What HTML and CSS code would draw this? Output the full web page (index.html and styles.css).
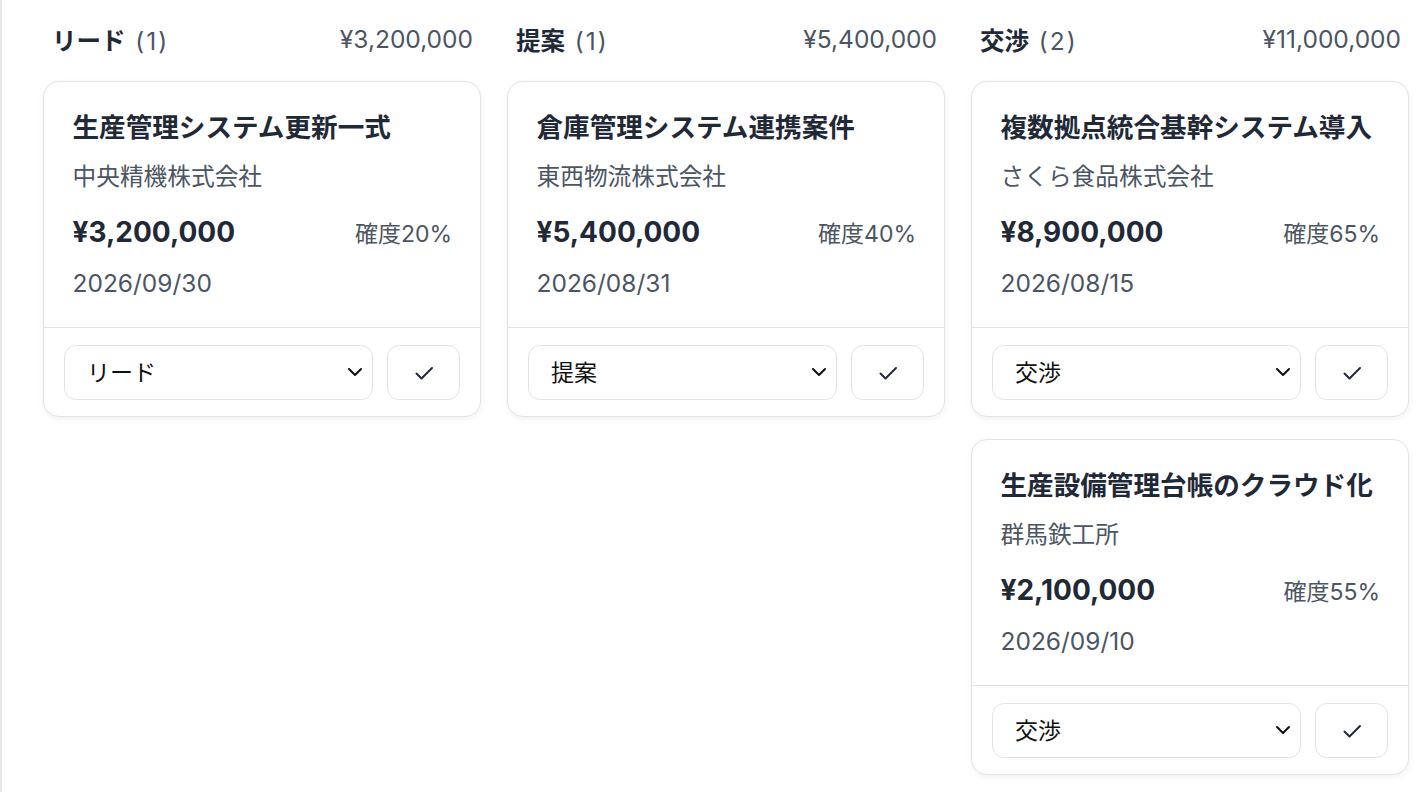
FILE: index.html
```html
<!DOCTYPE html>
<html lang="ja">
<head>
    <meta charset="UTF-8">
    <meta name="viewport" content="width=device-width, initial-scale=1.0">
    <title>案件ボード</title>
    <link rel="stylesheet" href="styles.css">
</head>
<body>
    <div class="board">
        <!-- リード -->
        <div class="column">
            <div class="column-head">
                <div class="column-title">リード <span class="count">(1)</span></div>
                <div class="column-total">¥3,200,000</div>
            </div>
            <div class="card">
                <div class="card-body">
                    <div class="deal-name">生産管理システム更新一式</div>
                    <div class="company">中央精機株式会社</div>
                    <div class="meta">
                        <span class="amount">¥3,200,000</span>
                        <span class="prob">確度20%</span>
                    </div>
                    <div class="date">2026/09/30</div>
                </div>
                <div class="card-foot">
                    <div class="select-wrap">
                        <select class="stage">
                            <option selected>リード</option>
                            <option>提案</option>
                            <option>交渉</option>
                        </select>
                        <svg class="chevron" width="20" height="20" viewBox="0 0 20 20"><path d="M4 7l6 6 6-6" fill="none" stroke="#111" stroke-width="2" stroke-linecap="round" stroke-linejoin="round"/></svg>
                    </div>
                    <button class="save"><svg width="24" height="24" viewBox="0 0 24 24"><path d="M4.5 12.5l5 5L20 7" fill="none" stroke="#1f2937" stroke-width="2" stroke-linecap="round" stroke-linejoin="round"/></svg></button>
                </div>
            </div>
        </div>

        <!-- 提案 -->
        <div class="column">
            <div class="column-head">
                <div class="column-title">提案 <span class="count">(1)</span></div>
                <div class="column-total">¥5,400,000</div>
            </div>
            <div class="card">
                <div class="card-body">
                    <div class="deal-name">倉庫管理システム連携案件</div>
                    <div class="company">東西物流株式会社</div>
                    <div class="meta">
                        <span class="amount">¥5,400,000</span>
                        <span class="prob">確度40%</span>
                    </div>
                    <div class="date">2026/08/31</div>
                </div>
                <div class="card-foot">
                    <div class="select-wrap">
                        <select class="stage">
                            <option>リード</option>
                            <option selected>提案</option>
                            <option>交渉</option>
                        </select>
                        <svg class="chevron" width="20" height="20" viewBox="0 0 20 20"><path d="M4 7l6 6 6-6" fill="none" stroke="#111" stroke-width="2" stroke-linecap="round" stroke-linejoin="round"/></svg>
                    </div>
                    <button class="save"><svg width="24" height="24" viewBox="0 0 24 24"><path d="M4.5 12.5l5 5L20 7" fill="none" stroke="#1f2937" stroke-width="2" stroke-linecap="round" stroke-linejoin="round"/></svg></button>
                </div>
            </div>
        </div>

        <!-- 交渉 -->
        <div class="column">
            <div class="column-head">
                <div class="column-title">交渉 <span class="count">(2)</span></div>
                <div class="column-total">¥11,000,000</div>
            </div>
            <div class="card">
                <div class="card-body">
                    <div class="deal-name">複数拠点統合基幹システム導入</div>
                    <div class="company">さくら食品株式会社</div>
                    <div class="meta">
                        <span class="amount">¥8,900,000</span>
                        <span class="prob">確度65%</span>
                    </div>
                    <div class="date">2026/08/15</div>
                </div>
                <div class="card-foot">
                    <div class="select-wrap">
                        <select class="stage">
                            <option>リード</option>
                            <option>提案</option>
                            <option selected>交渉</option>
                        </select>
                        <svg class="chevron" width="20" height="20" viewBox="0 0 20 20"><path d="M4 7l6 6 6-6" fill="none" stroke="#111" stroke-width="2" stroke-linecap="round" stroke-linejoin="round"/></svg>
                    </div>
                    <button class="save"><svg width="24" height="24" viewBox="0 0 24 24"><path d="M4.5 12.5l5 5L20 7" fill="none" stroke="#1f2937" stroke-width="2" stroke-linecap="round" stroke-linejoin="round"/></svg></button>
                </div>
            </div>
            <div class="card">
                <div class="card-body">
                    <div class="deal-name">生産設備管理台帳のクラウド化</div>
                    <div class="company">群馬鉄工所</div>
                    <div class="meta">
                        <span class="amount">¥2,100,000</span>
                        <span class="prob">確度55%</span>
                    </div>
                    <div class="date">2026/09/10</div>
                </div>
                <div class="card-foot">
                    <div class="select-wrap">
                        <select class="stage">
                            <option>リード</option>
                            <option>提案</option>
                            <option selected>交渉</option>
                        </select>
                        <svg class="chevron" width="20" height="20" viewBox="0 0 20 20"><path d="M4 7l6 6 6-6" fill="none" stroke="#111" stroke-width="2" stroke-linecap="round" stroke-linejoin="round"/></svg>
                    </div>
                    <button class="save"><svg width="24" height="24" viewBox="0 0 24 24"><path d="M4.5 12.5l5 5L20 7" fill="none" stroke="#1f2937" stroke-width="2" stroke-linecap="round" stroke-linejoin="round"/></svg></button>
                </div>
            </div>
        </div>
    </div>
</body>
</html>
```

FILE: styles.css
```css
body {
    margin: 0;
    font-family: Inter, "Noto Sans CJK JP", sans-serif;
    background: #fff;
    color: #1f2937;
}

.board {
    display: grid;
    grid-template-columns: 438px 438px 438px;
    column-gap: 26px;
    align-items: start;
    padding: 19px 0 0 41px;
    border-left: 2px solid #e5e7eb;
    min-height: 792px;
    box-sizing: border-box;
}

.column {
    display: flex;
    flex-direction: column;
    gap: 22px;
}

.column-head {
    display: flex;
    justify-content: space-between;
    align-items: center;
    height: 40px;
    padding: 0 8px 0 9px;
}

.column-title {
    font-size: 24.5px;
    font-weight: 700;
    color: #1f2937;
}

.count {
    font-weight: 400;
    font-size: 24.5px;
    color: #4b5563;
    margin-left: 4px;
    letter-spacing: 2px;
}

.column-total {
    font-size: 24.5px;
    color: #4b5563;
}

.card {
    border: 1.5px solid #e2e4ea;
    border-radius: 16px;
    background: #fff;
    box-shadow: 0 2px 6px rgba(0, 0, 0, 0.06);
}

.card-body {
    padding: 27px 28px 28px 28.5px;
}

.deal-name {
    font-size: 26.6px;
    font-weight: 700;
    line-height: 36px;
    color: #1f2937;
    white-space: nowrap;
}

.company {
    margin-top: 16px;
    font-size: 23.7px;
    line-height: 32px;
    color: #4b5563;
}

.meta {
    margin-top: 19px;
    display: flex;
    justify-content: space-between;
    align-items: center;
    height: 40px;
}

.amount {
    font-size: 28px;
    font-weight: 700;
    color: #1f2937;
}

.prob {
    font-size: 23px;
    color: #4b5563;
}

.date {
    margin-top: 15px;
    font-size: 24.5px;
    line-height: 32px;
    color: #4b5563;
}

.card-foot {
    border-top: 1.5px solid #e2e4ea;
    padding: 17px 20px 16px 20px;
    display: flex;
    gap: 14px;
}

.select-wrap {
    position: relative;
    flex: 1;
}

.stage {
    width: 100%;
    height: 55px;
    appearance: none;
    -webkit-appearance: none;
    border: 1.5px solid #e2e4ea;
    border-radius: 12px;
    background: #fff;
    padding: 0 40px 0 22px;
    font-family: Inter, "Noto Sans CJK JP", sans-serif;
    font-size: 23px;
    color: #111;
}

.chevron {
    position: absolute;
    right: 8px;
    top: 17px;
    pointer-events: none;
}

.save {
    width: 73px;
    height: 55px;
    border: 1.5px solid #e2e4ea;
    border-radius: 12px;
    background: #fff;
    display: flex;
    align-items: center;
    justify-content: center;
    cursor: pointer;
    padding: 0;
}
```
